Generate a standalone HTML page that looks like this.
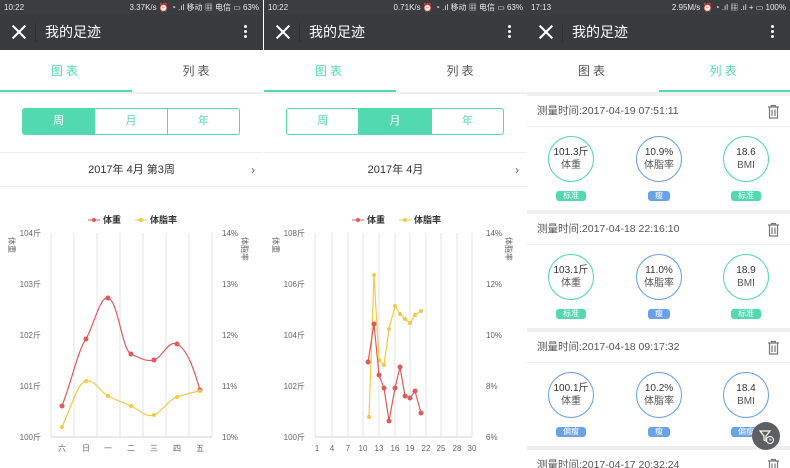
<!DOCTYPE html>
<html><head><meta charset="utf-8">
<style>
*{margin:0;padding:0;box-sizing:border-box}
body{width:790px;height:468px;overflow:hidden;background:#fff;font-family:"Liberation Sans","Noto Sans CJK SC",sans-serif;position:relative}
.p{position:absolute;top:0;height:468px;overflow:hidden;background:#fff}
.sb{position:absolute;left:0;top:0;width:100%;height:15px;background:#3b3c40;color:#e8e8e8;font-size:8px;line-height:15px}
.sb .l{position:absolute;left:4px}.sb .r{position:absolute;right:4px}
.tb{position:absolute;left:0;top:15px;width:100%;height:35px;background:#393a3e;color:#fff}
.tb .x{position:absolute;left:11px;top:9px;width:16px;height:16px}
.tb .x:before,.tb .x:after{content:"";position:absolute;left:7px;top:-1px;width:2px;height:18px;background:#fff;transform:rotate(45deg)}
.tb .x:after{transform:rotate(-45deg)}
.tb .dv{position:absolute;left:35px;top:8px;width:1px;height:19px;background:#2e2f32}
.tb .t{position:absolute;left:45px;top:8px;font-size:14px;line-height:18px}
.tb .d{position:absolute;right:16px;top:10px;width:3px;height:3px;background:#fff;border-radius:50%;box-shadow:0 5px 0 #fff,0 10px 0 #fff}
.tabs{position:absolute;top:50px;left:0;width:100%;height:42px;font-size:12px;color:#555}
.tabs div{position:absolute;top:0;width:50%;height:42px;line-height:42px;text-align:center;letter-spacing:3px}
.tabs .on{color:#52d9b0;border-bottom:2px solid #52d9b0}
.sep{position:absolute;left:0;width:100%;background:#f0f0f0}
.seg{position:absolute;top:108px;left:22px;width:218px;height:27px;border:1px solid #52d9b0;border-radius:3px;display:flex;font-size:11px;color:#52d9b0}
.seg div{flex:1;text-align:center;line-height:25px;border-left:1px solid #52d9b0}
.seg div:first-child{border-left:none}
.seg .on{background:#52d9b0;color:#fff}
.date{position:absolute;top:152px;left:0;width:100%;height:35px;border-top:1px solid #eee;border-bottom:1px solid #eee;text-align:center;line-height:34px;font-size:11px;color:#333}
.date .ar{position:absolute;right:8px;top:0;color:#666;font-size:12px}
.hd{position:absolute;left:0;width:100%;height:31px;border-bottom:1px solid #eee;font-size:10.5px;color:#555;line-height:31px;padding-left:10px}
.trash{position:absolute;right:10px;top:8px;width:13px;height:15px}
.c{position:absolute;width:46px;height:46px;border:1.5px solid #52d9b0;border-radius:50%;text-align:center;font-size:10px;color:#333;line-height:13px;padding-top:9px}
.c.b{border-color:#6aa2e8}
.c span{display:block;color:#555}
.tg{position:absolute;height:10px;width:30px;border-radius:3px;background:#52d9b0;color:#fff;font-size:8px;line-height:10px;text-align:center}
.tg.b{background:#6aa2e8}
.tg.s{width:22px}
</style></head><body>

<!-- Panel 1 -->
<div class="p" style="left:0;width:263px">
<div class="sb"><span class="l">10:22</span><span class="r">3.37K/s ⏰ ◔ .ıl 移动 ▦ 电信 ▭ 63%</span></div>
<div class="tb"><div class="x"></div><div class="dv"></div><div class="t">我的足迹</div><div class="d"></div></div>
<div class="tabs"><div class="on" style="left:0;width:132px">图表</div><div style="left:132px;width:131px">列表</div></div>
<div class="sep" style="top:92px;height:2px"></div>
<div class="seg"><div class="on">周</div><div>月</div><div>年</div></div>
<div class="date">2017年 4月 第3周<span class="ar">›</span></div>
</div>

<!-- Panel 2 -->
<div class="p" style="left:264px;width:263px">
<div class="sb"><span class="l">10:22</span><span class="r">0.71K/s ⏰ ◔ .ıl 移动 ▦ 电信 ▭ 63%</span></div>
<div class="tb"><div class="x"></div><div class="dv"></div><div class="t">我的足迹</div><div class="d"></div></div>
<div class="tabs"><div class="on" style="left:0;width:132px">图表</div><div style="left:132px;width:131px">列表</div></div>
<div class="sep" style="top:92px;height:2px"></div>
<div class="seg"><div>周</div><div class="on">月</div><div>年</div></div>
<div class="date">2017年 4月<span class="ar">›</span></div>
</div>

<svg width="790" height="468" style="position:absolute;left:0;top:0" font-family="Liberation Sans,Noto Sans CJK SC,sans-serif">
<g stroke="#dfe3ea" stroke-width="1">
<line x1="51" y1="233" x2="51" y2="437"/><line x1="74" y1="233" x2="74" y2="437"/><line x1="97" y1="233" x2="97" y2="437"/><line x1="120" y1="233" x2="120" y2="437"/><line x1="143" y1="233" x2="143" y2="437"/><line x1="166" y1="233" x2="166" y2="437"/><line x1="189" y1="233" x2="189" y2="437"/><line x1="212" y1="233" x2="212" y2="437"/>
</g>
<line x1="51" y1="437" x2="212" y2="437" stroke="#c8d6e8"/>
<g font-size="8" fill="#666" text-anchor="end">
<text x="41" y="236">104斤</text><text x="41" y="287">103斤</text><text x="41" y="338">102斤</text><text x="41" y="389">101斤</text><text x="41" y="440">100斤</text>
</g>
<g font-size="8" fill="#666">
<text x="222" y="236">14%</text><text x="222" y="287">13%</text><text x="222" y="338">12%</text><text x="222" y="389">11%</text><text x="222" y="440">10%</text>
</g>
<g font-size="8" fill="#666" text-anchor="middle">
<text x="62" y="451">六</text><text x="86" y="451">日</text><text x="108" y="451">一</text><text x="131" y="451">二</text><text x="154" y="451">三</text><text x="177" y="451">四</text><text x="200" y="451">五</text>
</g>
<text font-size="8" fill="#666" transform="translate(9,237) rotate(90)">体重</text>
<text font-size="8" fill="#666" transform="translate(242,237) rotate(90)">体脂率</text>
<g font-size="9" font-weight="bold" fill="#333">
<line x1="88" y1="220" x2="100" y2="220" stroke="#e05a5a"/><circle cx="94" cy="220" r="2" fill="#e05a5a"/><text x="103" y="223">体重</text>
<line x1="135" y1="220" x2="147" y2="220" stroke="#f5c842"/><circle cx="141" cy="220" r="2" fill="#f5c842"/><text x="150" y="223">体脂率</text>
</g>
<path d="M62,406 C72,380 78,350 86,339 C94,325 100,296 108,298 C118,300 122,350 131,354 C140,358 146,362 154,360 C162,358 168,340 177,344 C188,350 194,370 200,390" fill="none" stroke="#e05a5a" stroke-width="1.2"/>
<g fill="#e05a5a"><circle cx="62" cy="406" r="2.5"/><circle cx="86" cy="339" r="2.5"/><circle cx="108" cy="298" r="2.5"/><circle cx="131" cy="354" r="2.5"/><circle cx="154" cy="360" r="2.5"/><circle cx="177" cy="344" r="2.5"/><circle cx="200" cy="390" r="2.5"/></g>
<path d="M62,427 C72,405 78,382 86,381 C96,380 100,392 108,396 C116,400 124,403 131,406 C140,410 146,418 154,415 C162,412 168,400 177,397 C186,394 194,392 200,391" fill="none" stroke="#f5c842" stroke-width="1.2"/>
<g fill="#f5c842"><circle cx="62" cy="427" r="2"/><circle cx="86" cy="381" r="2"/><circle cx="108" cy="396" r="2"/><circle cx="131" cy="406" r="2"/><circle cx="154" cy="415" r="2"/><circle cx="177" cy="397" r="2"/><circle cx="200" cy="391" r="2"/></g>

<!-- chart 2 -->
<g stroke="#dfe3ea">
<line x1="315" y1="233" x2="315" y2="437"/><line x1="332" y1="233" x2="332" y2="437"/><line x1="348" y1="233" x2="348" y2="437"/><line x1="363" y1="233" x2="363" y2="437"/><line x1="379" y1="233" x2="379" y2="437"/><line x1="395" y1="233" x2="395" y2="437"/><line x1="410" y1="233" x2="410" y2="437"/><line x1="426" y1="233" x2="426" y2="437"/><line x1="441" y1="233" x2="441" y2="437"/><line x1="457" y1="233" x2="457" y2="437"/><line x1="472" y1="233" x2="472" y2="437"/>
</g>
<line x1="315" y1="437" x2="472" y2="437" stroke="#c8d6e8"/>
<g font-size="8" fill="#666" text-anchor="end">
<text x="305" y="236">108斤</text><text x="305" y="287">106斤</text><text x="305" y="338">104斤</text><text x="305" y="389">102斤</text><text x="305" y="440">100斤</text>
</g>
<g font-size="8" fill="#666">
<text x="486" y="236">14%</text><text x="486" y="287">12%</text><text x="486" y="338">10%</text><text x="486" y="389">8%</text><text x="486" y="440">6%</text>
</g>
<g font-size="8" fill="#666" text-anchor="middle">
<text x="317" y="451">1</text><text x="332" y="451">4</text><text x="348" y="451">7</text><text x="363" y="451">10</text><text x="379" y="451">13</text><text x="395" y="451">16</text><text x="410" y="451">19</text><text x="426" y="451">22</text><text x="441" y="451">25</text><text x="457" y="451">28</text><text x="472" y="451">30</text>
</g>
<text font-size="8" fill="#666" transform="translate(273,237) rotate(90)">体重</text>
<text font-size="8" fill="#666" transform="translate(506,237) rotate(90)">体脂率</text>
<g font-size="9" font-weight="bold" fill="#333">
<line x1="352" y1="220" x2="364" y2="220" stroke="#e05a5a"/><circle cx="358" cy="220" r="2" fill="#e05a5a"/><text x="367" y="223">体重</text>
<line x1="399" y1="220" x2="411" y2="220" stroke="#f5c842"/><circle cx="405" cy="220" r="2" fill="#f5c842"/><text x="414" y="223">体脂率</text>
</g>
<polyline points="369,417 374,275 379,360 384,365 389,329 395,306 400,314 405,319 410,323 415,315 421,311" fill="none" stroke="#f5c842" stroke-width="1.2"/>
<g fill="#f5c842"><circle cx="369" cy="417" r="2"/><circle cx="374" cy="275" r="2"/><circle cx="379" cy="360" r="2"/><circle cx="384" cy="365" r="2"/><circle cx="389" cy="329" r="2"/><circle cx="395" cy="306" r="2"/><circle cx="400" cy="314" r="2"/><circle cx="405" cy="319" r="2"/><circle cx="410" cy="323" r="2"/><circle cx="415" cy="315" r="2"/><circle cx="421" cy="311" r="2"/></g>
<polyline points="368,362 374,324 379,375 384,388 389,421 395,388 400,367 405,396 410,398 415,391 421,413" fill="none" stroke="#e05a5a" stroke-width="1.2"/>
<g fill="#e05a5a"><circle cx="368" cy="362" r="2.5"/><circle cx="374" cy="324" r="2.5"/><circle cx="379" cy="375" r="2.5"/><circle cx="384" cy="388" r="2.5"/><circle cx="389" cy="421" r="2.5"/><circle cx="395" cy="388" r="2.5"/><circle cx="400" cy="367" r="2.5"/><circle cx="405" cy="396" r="2.5"/><circle cx="410" cy="398" r="2.5"/><circle cx="415" cy="391" r="2.5"/><circle cx="421" cy="413" r="2.5"/></g>
</svg>

<!-- Panel 3 -->
<div class="p" style="left:527px;width:263px">
<div class="sb"><span class="l">17:13</span><span class="r">2.95M/s ⏰ ◔ .ıl ▦ .ıl + ▭ 100%</span></div>
<div class="tb"><div class="x"></div><div class="dv"></div><div class="t">我的足迹</div><div class="d"></div></div>
<div class="tabs"><div style="left:0;width:132px">图表</div><div class="on" style="left:132px;width:131px">列表</div></div>
<div class="sep" style="top:92px;height:4px"></div>

<div class="hd" style="top:96px">测量时间:2017-04-19 07:51:11<svg class="trash" viewBox="0 0 13 15"><path d="M1,3H12M4.5,3V1.5H8.5V3M2.5,3V14H10.5V3M5,5.5V12M8,5.5V12" fill="none" stroke="#777" stroke-width="1.2"/></svg></div>
<div class="c" style="left:21px;top:136px">101.3斤<span>体重</span></div>
<div class="c b" style="left:109px;top:136px">10.9%<span>体脂率</span></div>
<div class="c" style="left:196px;top:136px">18.6<span>BMI</span></div>
<div class="tg" style="left:29px;top:191px">标准</div>
<div class="tg b s" style="left:121px;top:191px">瘦</div>
<div class="tg" style="left:204px;top:191px">标准</div>
<div class="sep" style="top:210px;height:4px"></div>

<div class="hd" style="top:214px">测量时间:2017-04-18 22:16:10<svg class="trash" viewBox="0 0 13 15"><path d="M1,3H12M4.5,3V1.5H8.5V3M2.5,3V14H10.5V3M5,5.5V12M8,5.5V12" fill="none" stroke="#777" stroke-width="1.2"/></svg></div>
<div class="c" style="left:21px;top:254px">103.1斤<span>体重</span></div>
<div class="c b" style="left:109px;top:254px">11.0%<span>体脂率</span></div>
<div class="c" style="left:196px;top:254px">18.9<span>BMI</span></div>
<div class="tg" style="left:29px;top:309px">标准</div>
<div class="tg b s" style="left:121px;top:309px">瘦</div>
<div class="tg" style="left:204px;top:309px">标准</div>
<div class="sep" style="top:328px;height:4px"></div>

<div class="hd" style="top:332px">测量时间:2017-04-18 09:17:32<svg class="trash" viewBox="0 0 13 15"><path d="M1,3H12M4.5,3V1.5H8.5V3M2.5,3V14H10.5V3M5,5.5V12M8,5.5V12" fill="none" stroke="#777" stroke-width="1.2"/></svg></div>
<div class="c b" style="left:21px;top:372px">100.1斤<span>体重</span></div>
<div class="c b" style="left:109px;top:372px">10.2%<span>体脂率</span></div>
<div class="c b" style="left:196px;top:372px">18.4<span>BMI</span></div>
<div class="tg b" style="left:29px;top:427px">偏瘦</div>
<div class="tg b s" style="left:121px;top:427px">瘦</div>
<div class="tg b" style="left:204px;top:427px">偏瘦</div>
<div class="sep" style="top:446px;height:4px"></div>
<div class="hd" style="top:450px">测量时间:2017-04-17 20:32:24<svg class="trash" viewBox="0 0 13 15"><path d="M1,3H12M4.5,3V1.5H8.5V3M2.5,3V14H10.5V3M5,5.5V12M8,5.5V12" fill="none" stroke="#777" stroke-width="1.2"/></svg></div>
<div style="position:absolute;left:225px;top:422px;width:28px;height:28px;border-radius:50%;background:#5e5f62"><svg width="28" height="28" viewBox="0 0 28 28"><path d="M8,9H18L14,14V19L12,18V14Z" fill="none" stroke="#fff" stroke-width="1.2"/><circle cx="18" cy="18" r="3.5" fill="#5e5f62" stroke="#fff" stroke-width="1.1"/><path d="M18,16.5V18H19.5" stroke="#fff" fill="none" stroke-width="1"/></svg></div>
</div>
</body></html>
